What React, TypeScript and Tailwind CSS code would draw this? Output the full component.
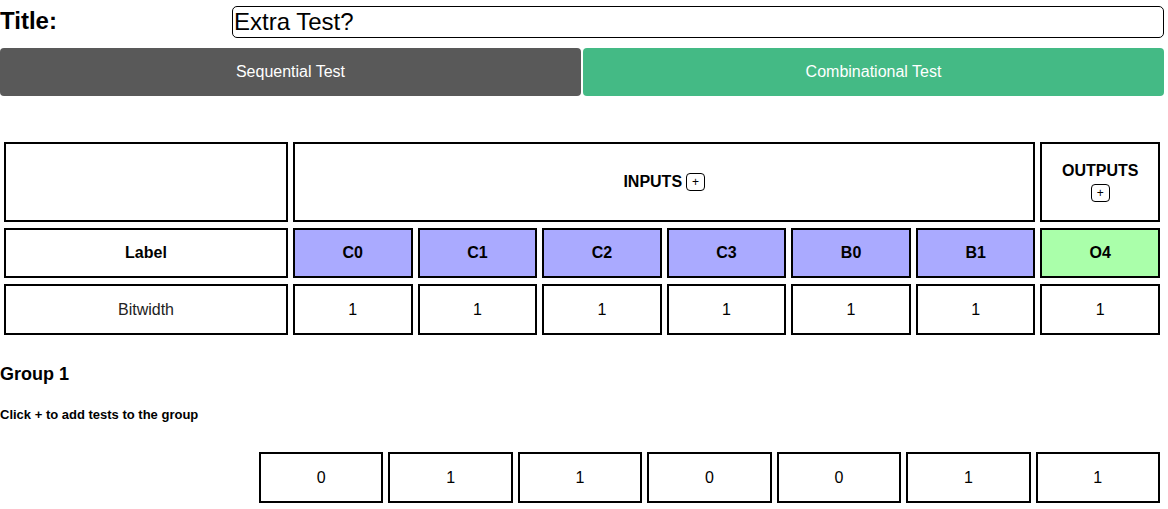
import React from "react";

const inputs = ["C0", "C1", "C2", "C3", "B0", "B1"];
const outputs = ["O4"];
const testRow = ["0", "1", "1", "0", "0", "1", "1"];

function PlusButton() {
  return (
    <span className="inline-flex items-center justify-center w-[19px] h-[18px] border-[1.5px] border-black rounded-[4px] text-[12px] leading-none font-normal">
      +
    </span>
  );
}

const cell = "border-2 border-black flex items-center justify-center";

export default function App() {
  return (
    <div className="w-[1168px] h-[509px] bg-white text-black font-['Liberation_Sans',Arial,sans-serif] overflow-hidden">
      {/* title */}
      <div className="flex items-start pt-[6px] pr-[4px]">
        <div className="w-[232px] mt-[1px] text-[24px] leading-[28px] font-bold">Title:</div>
        <input
          className="flex-1 h-[32px] border border-black rounded-[5px] px-[1px] text-[24px] outline-none"
          defaultValue="Extra Test?"
        />
      </div>

      {/* mode buttons */}
      <div className="flex gap-[2px] mt-[10px] pr-[4px] h-[48px]">
        <button className="flex-1 rounded-[4px] bg-[#595959] text-white text-[16px]">Sequential Test</button>
        <button className="flex-1 rounded-[4px] bg-[#44ba85] text-white text-[16px]">Combinational Test</button>
      </div>

      {/* io table */}
      <div className="mt-[46px] pl-[4px] pr-[8px] grid grid-cols-[284px_repeat(7,1fr)] gap-x-[5px] gap-y-[6px]">
        <div className={`${cell} h-[80px]`} />
        <div className={`${cell} h-[80px] col-span-6 gap-[4px] text-[16px] font-bold`}>
          <span>INPUTS</span>
          <PlusButton />
        </div>
        <div className={`${cell} h-[80px] flex-col gap-[3px] pb-[2px] text-[16px] font-bold`}>
          <span className="leading-[20px]">OUTPUTS</span>
          <PlusButton />
        </div>

        <div className={`${cell} h-[50px] text-[16px] font-bold`}>Label</div>
        {inputs.map((name) => (
          <div key={name} className={`${cell} h-[50px] bg-[#aaaaff] text-[16px] font-bold`}>
            {name}
          </div>
        ))}
        {outputs.map((name) => (
          <div key={name} className={`${cell} h-[50px] bg-[#aaffaa] text-[16px] font-bold`}>
            {name}
          </div>
        ))}

        <div className={`${cell} h-[51px] text-[16px] text-[#222]`}>Bitwidth</div>
        {[...inputs, ...outputs].map((name) => (
          <div key={name} className={`${cell} h-[51px] text-[16px]`}>
            1
          </div>
        ))}
      </div>

      {/* group */}
      <div className="mt-[28px] text-[18px] leading-[22px] font-bold">Group 1</div>
      <div className="mt-[22px] text-[13px] leading-[16px] font-bold">Click + to add tests to the group</div>

      <div className="mt-[29px] pl-[259px] pr-[8px] grid grid-cols-7 gap-x-[5px]">
        {testRow.map((v, i) => (
          <div key={i} className={`${cell} h-[51px] text-[16px]`}>
            {v}
          </div>
        ))}
      </div>
    </div>
  );
}
